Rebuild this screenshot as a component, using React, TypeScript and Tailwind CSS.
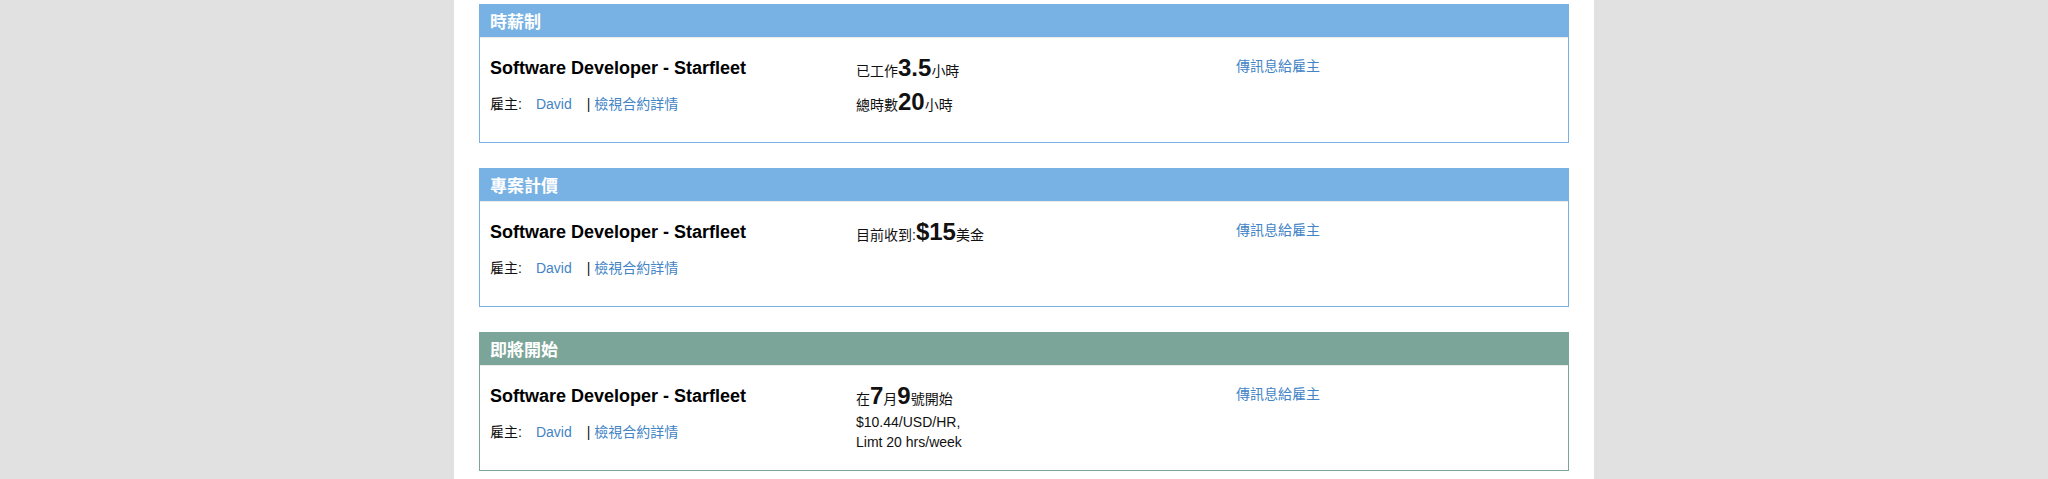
import React from "react";

type Contract = {
  status: string;
  color: "blue" | "green";
  title: string;
  employer: string;
  middle: React.ReactNode;
};

const big = "text-[24px] font-bold leading-[1.42857]";

const contracts: Contract[] = [
  {
    status: "時薪制",
    color: "blue",
    title: "Software Developer - Starfleet",
    employer: "David",
    middle: (
      <>
        <div>
          已工作<span className={big}>3.5</span>小時
        </div>
        <div>
          總時數<span className={big}>20</span>小時
        </div>
      </>
    ),
  },
  {
    status: "專案計價",
    color: "blue",
    title: "Software Developer - Starfleet",
    employer: "David",
    middle: (
      <div>
        目前收到:<span className={big}>$15</span>美金
      </div>
    ),
  },
  {
    status: "即將開始",
    color: "green",
    title: "Software Developer - Starfleet",
    employer: "David",
    middle: (
      <>
        <div>
          在<span className={big}>7</span>月<span className={big}>9</span>號開始
        </div>
        <div>$10.44/USD/HR,</div>
        <div>Limt 20 hrs/week</div>
      </>
    ),
  },
];

function ContractCard({ c }: { c: Contract }) {
  const border = c.color === "blue" ? "border-[#78b1e3]" : "border-[#7ba598]";
  const head = c.color === "blue" ? "bg-[#78b1e3]" : "bg-[#7ba598]";

  return (
    <div className={`h-[139px] border ${border} bg-white`}>
      {/* status bar */}
      <div className={`h-[33px] ${head} border-b border-[#ececec] px-[10px] pt-[8px]`}>
        <h3 className="text-[17px] font-bold leading-[20px] text-white">{c.status}</h3>
      </div>

      <div className="flex px-[10px] pt-[11px] text-[14px] leading-[1.42857] text-[#111]">
        {/* title + employer */}
        <div className="w-[366px]">
          <h4 className="mt-[10px] text-[18px] font-bold leading-[1.1] text-black">{c.title}</h4>
          <div className="mt-[16px] flex">
            <span>雇主:</span>
            <a className="ml-[14px] text-[#4384c6]">{c.employer}</a>
            <span className="ml-[15px] whitespace-pre">| </span>
            <a className="text-[#4384c6]">檢視合約詳情</a>
          </div>
        </div>

        {/* hours / amount */}
        <div className="w-[380px] pt-[2px]">{c.middle}</div>

        {/* message */}
        <div className="flex-1 pt-[8px]">
          <a className="text-[#4384c6]">傳訊息給雇主</a>
        </div>
      </div>
    </div>
  );
}

export default function App() {
  return (
    <div
      className="flex min-h-screen justify-center bg-[#e1e1e1]"
      style={{ fontFamily: '"Liberation Sans", "Noto Sans CJK TC", sans-serif' }}
    >
      <div className="flex w-[1140px] flex-col gap-[25px] bg-white px-[25px] pt-[4px] pb-[10px]">
        {contracts.map((c) => (
          <ContractCard key={c.status} c={c} />
        ))}
      </div>
    </div>
  );
}
